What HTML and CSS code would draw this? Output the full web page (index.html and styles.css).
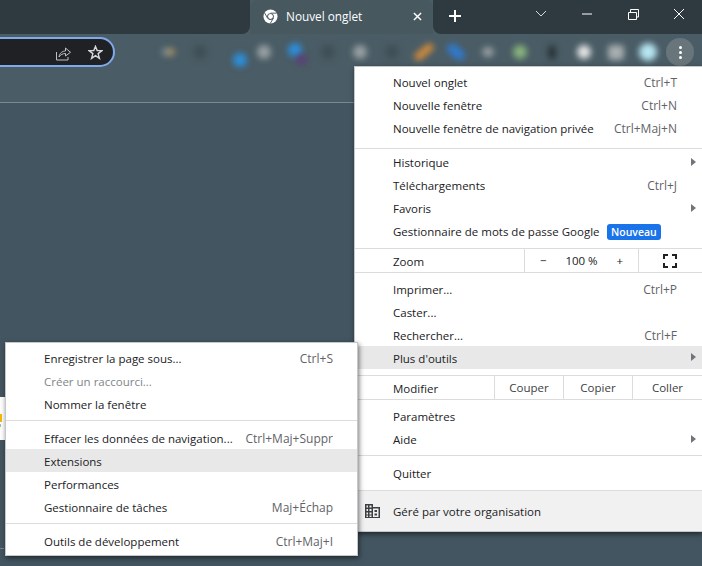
FILE: index.html
```html
<!DOCTYPE html>
<html lang="fr">
<head>
<meta charset="utf-8">
<title>Nouvel onglet</title>
<link rel="stylesheet" href="styles.css">
</head>
<body>
<div class="window">
  <div class="tabstrip">
    <div class="strip-left"></div>
    <div class="tab">
      <svg class="chrome" viewBox="0 0 16 16"><circle cx="8" cy="8" r="7.5" fill="#fff"/><circle cx="8" cy="8" r="3.6" fill="#47585f"/><circle cx="8" cy="8" r="2.6" fill="#fff"/><path d="M8 4.400H14.600M4.900 9.800 1.600 4M11.100 9.800 7.600 15.600" stroke="#47585f" stroke-width="1" fill="none"/></svg>
      <span class="tab-title">Nouvel onglet</span>
      <svg class="tab-close" viewBox="0 0 10 10"><path d="M1 1 9 9M9 1 1 9" stroke="#fff" stroke-width="1.600"/></svg>
    </div>
    <div class="strip-right">
      <svg class="plus" viewBox="0 0 12 12"><path d="M6 0V12M0 6H12" stroke="#fff" stroke-width="2"/></svg>
      <div class="controls">
        <svg class="ctl" viewBox="0 0 46 28"><path d="M18 11 23 16 28 11" stroke="#d5dadd" fill="none"/></svg>
        <svg class="ctl" viewBox="0 0 46 28"><path d="M18 14H28" stroke="#fff"/></svg>
        <svg class="ctl" viewBox="0 0 46 28"><path d="M18.500 12.500H26.500V19.500H18.500ZM20.500 12V9.500H28.500V17H27" stroke="#fff" fill="none"/></svg>
        <svg class="ctl" viewBox="0 0 46 28"><path d="M18 9 28 19M28 9 18 19" stroke="#fff"/></svg>
      </div>
    </div>
  </div>
  <div class="toolbar">
    <div class="omnibox">
      <svg class="omni-icon" viewBox="0 0 16 16"><path d="M1.500 7V15H13V12" stroke="#bdc1c6" fill="none"/><path d="M4 12C4.500 8 7.500 6 10.500 6V3L15.500 7.300 10.500 11V8.500C8 8.500 5.500 9.500 4 12Z" stroke="#bdc1c6" fill="none"/></svg>
      <svg class="omni-star" viewBox="0 0 16 16"><path d="M8 1.500 9.800 6H14.800L10.800 9.200 12.200 14.300 8 11.400 3.800 14.300 5.200 9.200 1.200 6H6.200Z" stroke="#d5d7d9" stroke-width="1.500" fill="none"/></svg>
    </div>
    <div class="ext-row">
      <div class="slot"><i class="blob b-amber"></i></div>
      <div class="slot"><i class="blob b-dark"></i></div>
      <div class="slot"><i class="blob b-blue b-low"></i></div>
      <div class="slot"><i class="blob b-gray"></i></div>
      <div class="slot"><i class="blob b-blue b-up"></i><i class="blob b-purple"></i></div>
      <div class="slot"><i class="blob b-dark"></i></div>
      <div class="slot"><i class="blob b-gray"></i></div>
      <div class="slot"><i class="blob b-dark"></i></div>
      <div class="slot"><i class="blob b-orange"></i></div>
      <div class="slot"><i class="blob b-blue b-diag"></i></div>
      <div class="slot"><i class="blob b-gray b-small"></i></div>
      <div class="slot"><i class="blob b-green"></i></div>
      <div class="slot"><i class="blob b-black"></i></div>
      <div class="slot"><i class="blob b-white"></i></div>
      <div class="slot"><i class="blob b-silver"></i></div>
      <div class="slot"><i class="blob b-cyan"></i></div>
      <div class="slot"><div class="kebab"><b></b><b></b><b></b></div></div>
    </div>
  </div>
  <div class="bookmarks"></div>
  <div class="content"></div>
</div>

<div class="peek"><i class="peek-y"></i><i class="peek-g"></i></div>
<div class="peek-dots">..</div>

<div class="menu main-menu">
  <div class="group g1">
    <div class="row"><span>Nouvel onglet</span><span class="key">Ctrl+T</span></div>
    <div class="row"><span>Nouvelle fenêtre</span><span class="key">Ctrl+N</span></div>
    <div class="row"><span>Nouvelle fenêtre de navigation privée</span><span class="key">Ctrl+Maj+N</span></div>
  </div>
  <div class="sep"></div>
  <div class="group g2">
    <div class="row has-sub"><span>Historique</span></div>
    <div class="row"><span>Téléchargements</span><span class="key">Ctrl+J</span></div>
    <div class="row has-sub"><span>Favoris</span></div>
    <div class="row"><span>Gestionnaire de mots de passe Google</span><span class="badge">Nouveau</span></div>
  </div>
  <div class="sep"></div>
  <div class="zoom-row">
    <span class="cell-label">Zoom</span>
    <div class="zoom-ctl"><span>−</span><span>100 %</span><span>+</span></div>
    <div class="zoom-full"><svg class="full-icon" viewBox="0 0 14 14"><path d="M1 5V1H5M9 1H13V5M13 9V13H9M5 13H1V9" stroke="#202124" stroke-width="2" fill="none"/></svg></div>
  </div>
  <div class="sep"></div>
  <div class="group g3">
    <div class="row raised"><span>Imprimer...</span><span class="key">Ctrl+P</span></div>
    <div class="row raised"><span>Caster...</span></div>
    <div class="row raised"><span>Rechercher...</span><span class="key">Ctrl+F</span></div>
    <div class="row has-sub active"><span>Plus d'outils</span></div>
  </div>
  <div class="sep"></div>
  <div class="edit-row">
    <span class="cell-label">Modifier</span>
    <span class="edit-btn">Couper</span><span class="edit-btn">Copier</span><span class="edit-btn">Coller</span>
  </div>
  <div class="sep"></div>
  <div class="group g4">
    <div class="row"><span>Paramètres</span></div>
    <div class="row has-sub"><span>Aide</span></div>
  </div>
  <div class="sep"></div>
  <div class="group g5">
    <div class="row"><span>Quitter</span></div>
  </div>
  <div class="sep"></div>
  <div class="footer">
    <svg class="org-icon" viewBox="0 0 15 14"><path fill="#3c4043" d="M0 0H8V3H15V14H0ZM1.500 1.500V3.500H3V1.500ZM4.500 1.500V3.500H6.500V1.500ZM1.500 5V7H3V5ZM4.500 5V7H6.500V5ZM1.500 8.500V10.500H3V8.500ZM4.500 8.500V10.500H6.500V8.500ZM1.500 11.500V13H3V11.500ZM4.500 11.500V13H6.500V11.500ZM8 4.500V13H13.500V4.500ZM9.500 6H12V8H9.500ZM9.500 9.500H12V11.500H9.500Z" fill-rule="evenodd"/></svg>
    <span>Géré par votre organisation</span>
  </div>
</div>

<div class="menu sub-menu">
  <div class="group s1">
    <div class="row"><span>Enregistrer la page sous...</span><span class="key">Ctrl+S</span></div>
    <div class="row disabled"><span>Créer un raccourci...</span></div>
    <div class="row"><span>Nommer la fenêtre</span></div>
  </div>
  <div class="sep"></div>
  <div class="group s2">
    <div class="row"><span>Effacer les données de navigation...</span><span class="key">Ctrl+Maj+Suppr</span></div>
    <div class="row active"><span>Extensions</span></div>
    <div class="row"><span>Performances</span></div>
    <div class="row"><span>Gestionnaire de tâches</span><span class="key">Maj+Échap</span></div>
  </div>
  <div class="sep"></div>
  <div class="group s3">
    <div class="row"><span>Outils de développement</span><span class="key">Ctrl+Maj+I</span></div>
  </div>
</div>
</body>
</html>
```
FILE: styles.css
```css
* { box-sizing: border-box; }
html, body { margin: 0; height: 100%; overflow: hidden; }
body { background: #435560; font-family: "Open Sans", "Noto Sans", sans-serif; font-size: 11.5px; color: #202124; }

.window { display: flex; flex-direction: column; height: 566px; background: #4a5c65; }

.tabstrip { display: flex; height: 34px; flex: none; }
.strip-left { width: 250px; background: #2e3a40; border-bottom-right-radius: 8px; }
.tab { width: 183px; display: flex; align-items: center; background: #47585f; border-radius: 8px 8px 0 0; padding: 0 0 2px 13px; color: #fff; }
.chrome { width: 15px; height: 15px; }
.tab-title { margin-left: 8px; flex: 1; font-size: 11.8px; }
.tab-close { width: 9px; height: 9px; margin-right: 11px; }
.strip-right { flex: 1; display: flex; background: #2e3a40; border-bottom-left-radius: 8px; position: relative; }
.plus { width: 12px; height: 12px; margin: 10px 0 0 16px; }
.controls { margin-left: auto; display: flex; height: 28px; }
.ctl { width: 46px; height: 28px; display: block; }

.toolbar { display: flex; height: 36px; flex: none; padding-top: 3px; background: #4a5c65; }
.omnibox { width: 115px; height: 30px; background: #202124; border: 2px solid #80a9ea; border-left: 0; border-radius: 0 15px 15px 0; display: flex; align-items: center; justify-content: flex-end; padding-right: 10px; gap: 17px; }
.omni-icon { width: 16px; height: 16px; margin-top: 1px; }
.omni-star { width: 15px; height: 15px; }
.ext-row { display: flex; margin-left: 37px; }
.slot { width: 32px; height: 30px; display: flex; align-items: center; justify-content: center; position: relative; }

.blob { display: block; width: 14px; height: 14px; border-radius: 50%; filter: blur(3px); }
.b-amber { width: 14px; height: 8px; background: linear-gradient(90deg, #5b89a0, #d29a55); }
.b-dark { background: #3f4f57; }
.b-blue { background: #2d8fdc; }
.b-low { position: relative; top: 8px; left: 8px; }
.b-up { position: relative; top: -2px; left: -1px; }
.b-gray { background: #98a0a3; }
.b-small { width: 12px; height: 10px; }
.b-purple { position: absolute; left: 16px; top: 17px; width: 11px; height: 11px; background: #5d3f78; }
.b-orange { width: 22px; height: 8px; border-radius: 4px; background: #d58c3a; transform: rotate(-40deg); }
.b-diag { width: 20px; height: 10px; border-radius: 5px; background: #2f7bd0; transform: rotate(40deg); }
.b-green { background: #88b47e; }
.b-black { width: 8px; height: 15px; background: #263035; }
.b-white { background: #e4e6e6; }
.b-silver { background: #a9afb1; width: 16px; height: 15px; border-radius: 4px; }
.b-cyan { width: 18px; height: 18px; background: #b5e6f2; }

.kebab { width: 28px; height: 28px; border-radius: 50%; background: #68767c; display: flex; flex-direction: column; align-items: center; justify-content: center; gap: 2px; }
.kebab b { width: 3px; height: 3px; background: #fff; border-radius: 50%; }

.bookmarks { height: 33px; flex: none; background: #4a5c65; border-bottom: 1px solid #7a8a91; }
.content { flex: 1; background: #435560; }

.peek { position: absolute; left: 0; top: 397px; width: 6px; height: 43px; background: #fff; }
.peek-y { position: absolute; left: 0; top: 17px; width: 2px; height: 8px; background: #f6b80f; }
.peek-g { position: absolute; left: 0; top: 27px; width: 1px; height: 3px; background: #8cc9a0; }
.peek-dots { position: absolute; left: 0; top: 540px; color: #d8dcde; font-size: 8px; line-height: 12px; }

.menu { position: absolute; background: #fff; border: 1px solid #c4c8ca; box-shadow: 1px 2px 5px rgba(0, 0, 0, .55); }
.main-menu { left: 354px; top: 66px; width: 348px; border-right: 0; }
.sub-menu { left: 5px; top: 342px; width: 353px; }

.row { height: 23px; display: flex; align-items: center; justify-content: space-between; padding: 0 24px 0 38px; white-space: nowrap; position: relative; }
.main-menu .row { padding-right: 25px; }
.raised { padding-top: 2px; }
.main-menu .raised { padding-top: 2px; }
.s2 .row, .active { padding-top: 2px; }
.key { color: #5f6368; font-size: 12px; }
.active { background: #e8e8e8; }
.disabled { color: #80868b; }
.has-sub::after { content: ""; position: absolute; right: 6px; top: 7px; border-left: 5px solid #70757a; border-top: 4px solid transparent; border-bottom: 4px solid transparent; }

.sep { height: 1px; background: #dcdcdc; }
.g1 { padding: 4px 0 8px; }
.g2 { padding: 2px 0 5px; }
.g3 { padding: 4px 0 6px; }
.g4 { padding: 5px 0 4px; }
.g5 { padding: 6px 0 5px; }
.s1 { padding: 4px 0; }
.s2 { padding: 5px 0; }
.s3 { padding: 6px 0 2px; }

.badge { margin-left: 7px; margin-right: auto; height: 16px; line-height: 16px; padding: 0 4.5px; background: #1a73e8; color: #fff; font-weight: 600; font-size: 10.5px; border-radius: 3px; }

.zoom-row, .edit-row { display: flex; height: 23px; align-items: center; }
.cell-label { width: 139px; padding-left: 38px; padding-top: 2px; flex: none; }
.zoom-row .cell-label { width: 169px; }
.zoom-ctl { width: 115px; height: 100%; display: flex; align-items: center; justify-content: space-between; padding: 0 15px; border-left: 1px solid #dcdcdc; border-right: 1px solid #dcdcdc; }
.zoom-full { flex: 1; display: flex; align-items: center; padding-left: 24px; }
.full-icon { width: 14px; height: 14px; }
.edit-btn { width: 69px; height: 100%; display: flex; align-items: center; justify-content: center; border-left: 1px solid #dcdcdc; color: #3c4043; }
.edit-row .edit-btn:last-child { flex: 1; }

.footer { height: 40px; background: #f1f1f1; display: flex; align-items: center; padding-left: 10px; }
.org-icon { width: 15px; height: 14px; margin-right: 13px; }
```
